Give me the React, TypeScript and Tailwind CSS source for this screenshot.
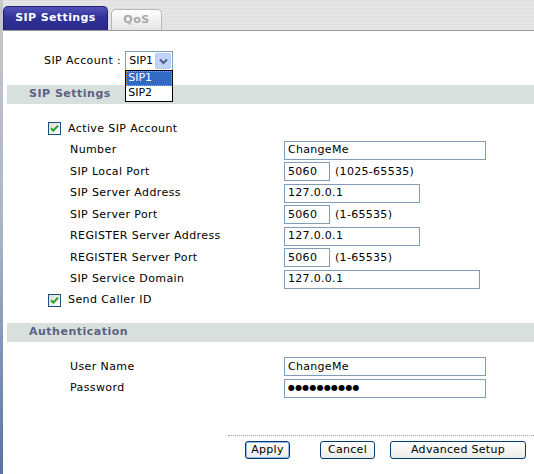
import { ReactNode } from "react";

const font = { fontFamily: "'DejaVu Sans', Verdana, sans-serif" };

const Check = () => (
  <span className="flex h-[13px] w-[13px] items-center justify-center border border-[#1c5180] bg-gradient-to-br from-[#dcdcd7] to-white">
    <svg width="9" height="9" viewBox="0 0 9 9">
      <path d="M1 4.2 L3.4 6.6 L8 1.6" stroke="#21a121" strokeWidth="2" fill="none" />
    </svg>
  </span>
);

const Field = ({ w, value, password }: { w: string; value: string; password?: boolean }) => (
  <div
    className={`flex h-[19px] items-center border border-[#7f9db9] bg-white pl-[3px] text-black ${w} ${
      password ? "text-[8px] tracking-[0.2px]" : "text-[11px] tracking-[0.3px]"
    }`}
  >
    {value}
  </div>
);

const Row = ({ label, children }: { label: string; children: ReactNode }) => (
  <div className="flex h-[21.5px] items-center">
    <div className="w-[277px] pl-[63px] text-[11px] tracking-[0.4px] text-black">{label}</div>
    <div className="flex items-center gap-[5px]">{children}</div>
  </div>
);

const SectionBar = ({ title }: { title: string }) => (
  <div className="flex h-[19px] items-center bg-[#d8e0de] pl-[22px] text-[11px] font-bold tracking-[0.5px] text-[#5b6284]">
    {title}
  </div>
);

const Btn = ({ children, w, focus }: { children: ReactNode; w: string; focus?: boolean }) => (
  <button
    className={`flex h-[18px] items-center justify-center rounded-[3px] border border-[#003c74] bg-gradient-to-b from-white to-[#ecebe6] text-[11px] tracking-[0.3px] text-black ${w} ${
      focus ? "shadow-[inset_0_0_0_1px_#98b8ea]" : ""
    }`}
  >
    {children}
  </button>
);

export default function App() {
  return (
    <div className="flex h-[474px] w-[534px] overflow-hidden bg-white" style={font}>
      <div className="w-[3px] bg-gradient-to-b from-[#c8c8c8] via-[#aab3c6] to-[#5a72a4]" />
      <div className="flex flex-1 flex-col">
        {/* tabs */}
        <div className="flex h-[31px] items-end gap-[3px] border-b border-[#9a9a9a] bg-[repeating-linear-gradient(0deg,#e8e8e8_0px,#e8e8e8_1px,#dedede_1px,#dedede_2px)]">
          <div className="flex h-[24px] w-[105px] items-center justify-center rounded-t-[5px] border border-b-0 border-[#20206a] bg-gradient-to-b from-[#5252b8] via-[#2f2f96] to-[#2a2a8c] pb-[1px] text-[11px] font-bold tracking-[0.4px] text-white">
            SIP Settings
          </div>
          <div className="flex h-[21px] w-[51px] items-center justify-center rounded-t-[5px] border border-b-0 border-[#b8b8b8] bg-gradient-to-b from-white to-[#e4e4e4] text-[11px] font-bold tracking-[0.5px] text-[#a8a8a8]">
            QoS
          </div>
        </div>

        {/* account selector */}
        <div className="flex h-[54px] items-start pt-[20px]">
          <div className="flex items-center">
            <span className="ml-[41px] mr-[4px] text-[11px] tracking-[0.4px] text-black">SIP Account :</span>
            <div className="relative">
              <div className="flex h-[20px] w-[48px] items-center border border-[#7f9db9] bg-white">
                <span className="flex-1 pl-[3px] text-[11px] text-black">SIP1</span>
                <span className="mr-[1px] flex h-[16px] w-[16px] items-center justify-center rounded-[2px] border border-[#b9cbf3] bg-[#c1d3fb]">
                  <svg width="9" height="7" viewBox="0 0 9 7">
                    <path d="M1 1.5 L4.5 5 L8 1.5" stroke="#4d6185" strokeWidth="2" fill="none" />
                  </svg>
                </span>
              </div>
              <div className="absolute left-0 top-[19px] z-10 w-[48px] border border-black bg-white text-[11px] text-black">
                <div className="flex h-[15px] items-center border border-dotted border-[#e0a040] bg-[#316ac5] pl-[1px] text-white">
                  SIP1
                </div>
                <div className="flex h-[15px] items-center pl-[2px]">SIP2</div>
              </div>
            </div>
          </div>
        </div>

        <div className="pl-[4px]">
          <SectionBar title="SIP Settings" />
        </div>

        <div className="flex flex-col pl-[4px] pt-[14px]">
          <div className="flex h-[21.5px] items-center gap-[7px] pl-[41px] text-[11px] tracking-[0.4px] text-black">
            <Check />
            <span>Active SIP Account</span>
          </div>
          <Row label="Number">
            <Field w="w-[202px]" value="ChangeMe" />
          </Row>
          <Row label="SIP Local Port">
            <Field w="w-[46px]" value="5060" />
            <span className="text-[11px] tracking-[0.3px]">(1025-65535)</span>
          </Row>
          <Row label="SIP Server Address">
            <Field w="w-[136px]" value="127.0.0.1" />
          </Row>
          <Row label="SIP Server Port">
            <Field w="w-[46px]" value="5060" />
            <span className="text-[11px] tracking-[0.3px]">(1-65535)</span>
          </Row>
          <Row label="REGISTER Server Address">
            <Field w="w-[136px]" value="127.0.0.1" />
          </Row>
          <Row label="REGISTER Server Port">
            <Field w="w-[46px]" value="5060" />
            <span className="text-[11px] tracking-[0.3px]">(1-65535)</span>
          </Row>
          <Row label="SIP Service Domain">
            <Field w="w-[196px]" value="127.0.0.1" />
          </Row>
          <div className="flex h-[20px] items-center gap-[7px] pl-[41px] text-[11px] tracking-[0.4px] text-black">
            <Check />
            <span>Send Caller ID</span>
          </div>
        </div>

        <div className="pl-[4px] pt-[13px]">
          <SectionBar title="Authentication" />
        </div>

        <div className="flex flex-col pl-[4px] pt-[14px]">
          <Row label="User Name">
            <Field w="w-[202px]" value="ChangeMe" />
          </Row>
          <Row label="Password">
            <Field w="w-[202px]" value="●●●●●●●●●●" password />
          </Row>
        </div>

        <div className="ml-[225px] mt-[36px] border-t border-dotted border-[#a0a0a0]" />
        <div className="flex items-center pl-[242px] pt-[5px]">
          <Btn w="w-[45px]" focus>
            Apply
          </Btn>
          <div className="w-[30px]" />
          <Btn w="w-[55px]">Cancel</Btn>
          <div className="w-[15px]" />
          <Btn w="w-[136px]">Advanced Setup</Btn>
        </div>
      </div>
    </div>
  );
}
